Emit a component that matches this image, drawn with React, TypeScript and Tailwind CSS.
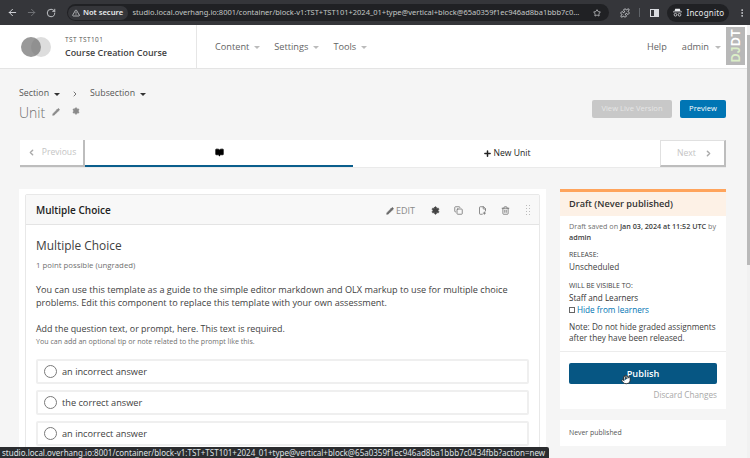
import React from "react";
import { ArrowLeft, ArrowRight, RotateCw, TriangleAlert, Star, Puzzle, EllipsisVertical, ChevronLeft, ChevronRight, Plus, Pencil, Settings, Copy, FilePlus2, Trash2, BookOpen, Hand } from "lucide-react";

const Caret = ({ c = "border-t-[#bbb]" }: { c?: string }) => (
  <span className={`inline-block w-0 h-0 border-x-[3px] border-x-transparent border-t-[3px] ${c}`} />
);

function Chrome() {
  return (
    <div className="h-[25px] bg-[#35363a] flex items-center text-[#e8eaed] shrink-0 font-['Noto_Sans',sans-serif]">
      <ArrowLeft className="w-[11px] h-[11px] ml-[6.5px] text-[#dadce0]" />
      <ArrowRight className="w-[11px] h-[11px] ml-[8px] text-[#74767a]" />
      <RotateCw className="w-[10px] h-[10px] ml-[9px] text-[#dadce0]" />
      <div className="ml-[11px] w-[542px] h-[17px] rounded-full bg-[#202124] flex items-center pl-[1px]">
        <div className="h-[14px] w-[60px] rounded-full bg-[#35363a] flex items-center justify-center gap-[3px] text-[7.6px] font-semibold whitespace-nowrap">
          <TriangleAlert className="w-[8px] h-[8px]" />
          Not secure
        </div>
        <span className="ml-[5px] text-[7.5px] text-[#c4c7c5] whitespace-nowrap w-[454px]">
          studio.local.overhang.io:8001/container/block-v1:TST+TST101+2024_01+type@vertical+block@65a0359f1ec946ad8ba1bbb7c0...
        </span>
        <Star className="w-[8px] h-[8px] ml-[6px] text-[#e8eaed]" />
      </div>
      <Puzzle className="w-[10px] h-[10px] ml-[11px] text-[#dadce0]" />
      <div className="w-px h-[9px] bg-[#5f6368] ml-[9px]" />
      <div className="ml-[10px] w-[9px] h-[8px] border border-[#dadce0] flex justify-end"><div className="w-[4px] bg-[#dadce0]" /></div>
      <div className="ml-[8px] w-[62px] h-[18px] rounded-full bg-[#202124] flex items-center pl-[6px] gap-[5px] text-[8px] tracking-[0.2px]">
        <svg viewBox="0 0 12 12" className="w-[9px] h-[9px]" fill="#e8eaed"><path d="M3 1h6l1 3H2zM0 4.7h12v1H0z" /><circle cx="3.3" cy="9" r="1.8" fill="none" stroke="#e8eaed" /><circle cx="8.7" cy="9" r="1.8" fill="none" stroke="#e8eaed" /></svg>
        Incognito
      </div>
      <EllipsisVertical className="w-[10px] h-[10px] ml-[8px] text-[#dadce0]" />
    </div>
  );
}

function Header() {
  return (
    <div className="h-[44px] bg-white border-b border-[#e4e4e4] flex items-stretch shrink-0 text-[#646464]">
      <div className="w-[197px] border-r border-[#e6e6e6] flex items-center pl-[21px]">
        <div className="relative w-[30px] h-[20px] mr-[14px]">
          <div className="absolute left-0 top-0 w-[20px] h-[20px] rounded-full bg-[#999999]" />
          <div className="absolute left-[10px] top-0 w-[20px] h-[20px] rounded-full bg-[#787878]/25" />
        </div>
        <div className="flex flex-col">
          <span className="text-[6.5px] leading-[9px] tracking-[0.4px] text-[#555] mb-[3px]">TST TST101</span>
          <span className="text-[8.95px] leading-[12px] font-semibold text-[#414141]">Course Creation Course</span>
        </div>
      </div>
      <div className="flex items-center text-[9.2px] pl-[18px] font-medium">
        <span>Content</span>
        <span className="ml-[5px] mr-[14px] -mt-[1px]"><Caret /></span>
        <span>Settings</span>
        <span className="ml-[5px] mr-[14px] -mt-[1px]"><Caret /></span>
        <span>Tools</span>
        <span className="ml-[5px] -mt-[1px]"><Caret /></span>
      </div>
      <div className="ml-auto flex items-center text-[9.2px] mr-[29px] font-medium">
        <span>Help</span>
        <span className="ml-[15px]">admin</span>
        <span className="ml-[6px] -mt-[1px]"><Caret /></span>
      </div>
    </div>
  );
}

function Toolbar() {
  return (
    <div className="flex justify-between pt-[18px] h-[71px] pl-[19px] pr-[24px]">
      <div>
        <div className="flex items-center text-[8.8px] text-[#555] h-[14px]">
          Section<span className="ml-[5px]"><Caret c="border-t-[#333]" /></span>
          <ChevronRight className="w-[8px] h-[8px] ml-[11px] mr-[11px] text-[#333]" />
          Subsection<span className="ml-[5px]"><Caret c="border-t-[#333]" /></span>
        </div>
        <div className="flex items-center h-[20px] mt-[1px] text-[#8a8a8a]">
          <span className="text-[14px] font-light text-[#707070]">Unit</span>
          <Pencil className="w-[8px] h-[8px] ml-[7px] fill-[#8a8a8a]" />
          <Settings className="w-[8px] h-[8px] ml-[12px] -mt-[3px] fill-[#8a8a8a]" />
        </div>
      </div>
      <div className="flex gap-[8px] pt-[13px] items-start">
        <div className="h-[18px] w-[80px] rounded-[2px] bg-[#c8c8c8] text-[#e6e6e6] text-[7.6px] flex items-center justify-center">View Live Version</div>
        <div className="h-[18px] w-[46px] rounded-[2px] bg-[#0075b4] text-white text-[7.6px] flex items-center justify-center">Preview</div>
      </div>
    </div>
  );
}

function SeqNav() {
  return (
    <div className="ml-[20px] mr-[24px] h-[28px] flex bg-white border-b border-[#eaeaea] text-[8.6px]">
      <div className="w-[65px] border-r-2 border-b-2 border-[#bdbdbd] flex items-center justify-center gap-[6px] text-[#c4c4c4]">
        <ChevronLeft className="w-[9px] h-[9px] text-[#aaa]" strokeWidth={4} />Previous
      </div>
      <div className="w-[268px] border-b-2 border-[#0a5e8c] flex items-center justify-center">
        <BookOpen className="w-[9px] h-[9px] text-black fill-black" />
      </div>
      <div className="flex-1 flex items-center justify-center gap-[2px] text-[#222]">
        <Plus className="w-[9px] h-[9px]" strokeWidth={4} />New Unit
      </div>
      <div className="w-[66px] border-r-2 border-b-2 border-r-[#bdbdbd] border-b-[#bdbdbd] border-l border-t border-l-[#e0e0e0] border-t-[#e0e0e0] flex items-center pl-[16px] gap-[8px] text-[#c4c4c4]">
        Next<ChevronRight className="w-[9px] h-[9px] text-[#aaa]" strokeWidth={4} />
      </div>
    </div>
  );
}

function Answer({ t }: { t: string }) {
  return (
    <div className="h-[25px] rounded-[2px] border-2 border-[#efefef] flex items-center pl-[6px] shrink-0">
      <div className="w-[13px] h-[13px] rounded-full border border-[#7a7a7a] bg-white" />
      <span className="ml-[5px] text-[9.2px] text-[#414141]">{t}</span>
    </div>
  );
}

function Card() {
  return (
    <div className="bg-white w-[527px] pt-[5px] px-[6px] h-[269px] overflow-hidden">
      <div className="border border-[#e8e8e8] rounded-[2px]">
        <div className="h-[30px] bg-[#f8f8f8] border-b border-[#e4e4e4] flex items-center pl-[10px] pr-[9px] pt-[2px]">
          <span className="text-[10px] font-semibold text-[#222]">Multiple Choice</span>
          <div className="ml-auto flex items-center text-[#6a6a6a]">
            <Pencil className="w-[8px] h-[8px] fill-[#6a6a6a]" />
            <span className="text-[9px] ml-[2px] text-[#8a8a8a]">EDIT</span>
            <Settings className="w-[9px] h-[9px] ml-[16px] fill-[#444] text-[#444]" />
            <Copy className="w-[9px] h-[9px] ml-[14px]" />
            <FilePlus2 className="w-[9px] h-[9px] ml-[15px]" />
            <Trash2 className="w-[9px] h-[9px] ml-[14px]" />
            <div className="w-[5px] h-[13px] ml-[15px] bg-[radial-gradient(#bbb_1px,transparent_1px)] bg-[length:3px_3px]" />
          </div>
        </div>
        <div className="px-[10px] pt-[12px] h-[300px]">
          <div className="text-[11.9px] leading-[16px] text-[#414141]">Multiple Choice</div>
          <div className="text-[7.8px] leading-[10px] text-[#707070] mt-[7px]">1 point possible (ungraded)</div>
          <div className="text-[9.12px] leading-[13px] text-[#414141] mt-[13px]">
            You can use this template as a guide to the simple editor markdown and OLX markup to use for multiple choice<br />
            problems. Edit this component to replace this template with your own assessment.
          </div>
          <div className="text-[8.9px] leading-[13px] text-[#414141] mt-[13px]">Add the question text, or prompt, here. This text is required.</div>
          <div className="text-[7.1px] leading-[10px] text-[#707070] mt-[1px]">You can add an optional tip or note related to the prompt like this.</div>
          <div className="flex flex-col gap-[6px] mt-[13px]">
            <Answer t="an incorrect answer" />
            <Answer t="the correct answer" />
            <Answer t="an incorrect answer" />
          </div>
        </div>
      </div>
    </div>
  );
}

function Sidebar() {
  return (
    <div className="w-[166px] flex flex-col">
      <div className="bg-white">
        <div className="h-[27px] border-t-[3px] border-[#ffa45c] bg-[#fdf1e6] flex items-center pl-[9px] text-[9.2px] font-semibold text-[#333]">
          Draft (Never published)
        </div>
        <div className="px-[9px] pt-[5px] h-[136px] border-b border-[#ececec]">
          <div className="text-[7.2px] leading-[11px] text-[#707070]">
            Draft saved on <b className="font-semibold text-[#414141]">Jan 03, 2024 at 11:52 UTC</b> by<br />
            <b className="font-semibold text-[#414141]">admin</b>
          </div>
          <div className="text-[6.9px] leading-[10px] font-medium text-[#414141] mt-[7px]">RELEASE:</div>
          <div className="text-[8.2px] leading-[12px] text-[#414141] mt-[1px]">Unscheduled</div>
          <div className="text-[6.9px] leading-[10px] font-medium text-[#414141] mt-[8px]">WILL BE VISIBLE TO:</div>
          <div className="text-[8.1px] leading-[12px] font-medium text-[#333] mt-[1px]">Staff and Learners</div>
          <div className="text-[8.2px] leading-[12px] text-[#0075b4] flex items-center">
            <span className="w-[6px] h-[6px] border border-[#666] mr-[2px]" />Hide from learners
          </div>
          <div className="text-[8.2px] leading-[11px] text-[#414141] mt-[5px]">
            Note: Do not hide graded assignments<br />after they have been released.
          </div>
        </div>
        <div className="px-[9px] pt-[11px] h-[57px] relative">
          <div className="h-[21px] rounded-[2px] bg-[#065683] text-white text-[9.2px] font-semibold flex items-center justify-center">Publish</div>
          <div className="text-right text-[8.2px] text-[#a8a8a8] mt-[5px]">Discard Changes</div>
          <Hand className="absolute left-[61px] top-[22px] w-[10px] h-[11px] fill-white text-[#222]" />
        </div>
      </div>
      <div className="bg-white h-[26px] mt-[11px] pl-[9px] flex items-center text-[6.9px] text-[#555]">Never published</div>
    </div>
  );
}

export default function App() {
  return (
    <div className="relative w-[750px] h-[458px] overflow-hidden bg-[#f5f5f5] font-['Open_Sans',sans-serif] flex flex-col">
      <Chrome />
      <Header />
      <Toolbar />
      <SeqNav />
      <div className="flex justify-between pl-[19px] pr-[24px] mt-[21px]">
        <Card />
        <Sidebar />
      </div>

      <div className="absolute right-[4px] top-[26px] w-[21px] h-[40px] bg-[#b8b8b8] border border-white flex items-center justify-center">
        <span className="[writing-mode:vertical-rl] rotate-180 text-[12px] leading-none font-bold text-white tracking-[0.5px] font-['Liberation_Sans',sans-serif]"><span className="text-[#dcefc8]">DJ</span>DT</span>
      </div>
      <div className="absolute right-0 top-[25px] bottom-0 w-[3px] bg-[#f1f1f1]"><div className="h-[230px] mt-[10px] bg-[#b9b9b9]" /></div>
      <div className="absolute left-0 bottom-0 w-[549px] h-[11px] bg-[#2b2c2f] text-[#dfe1e5] text-[8px] leading-[11px] pl-[2px] whitespace-nowrap rounded-tr-[2px] font-['Noto_Sans',sans-serif]">
        studio.local.overhang.io:8001/container/block-v1:TST+TST101+2024_01+type@vertical+block@65a0359f1ec946ad8ba1bbb7c0434fbb?action=new
      </div>
    </div>
  );
}
